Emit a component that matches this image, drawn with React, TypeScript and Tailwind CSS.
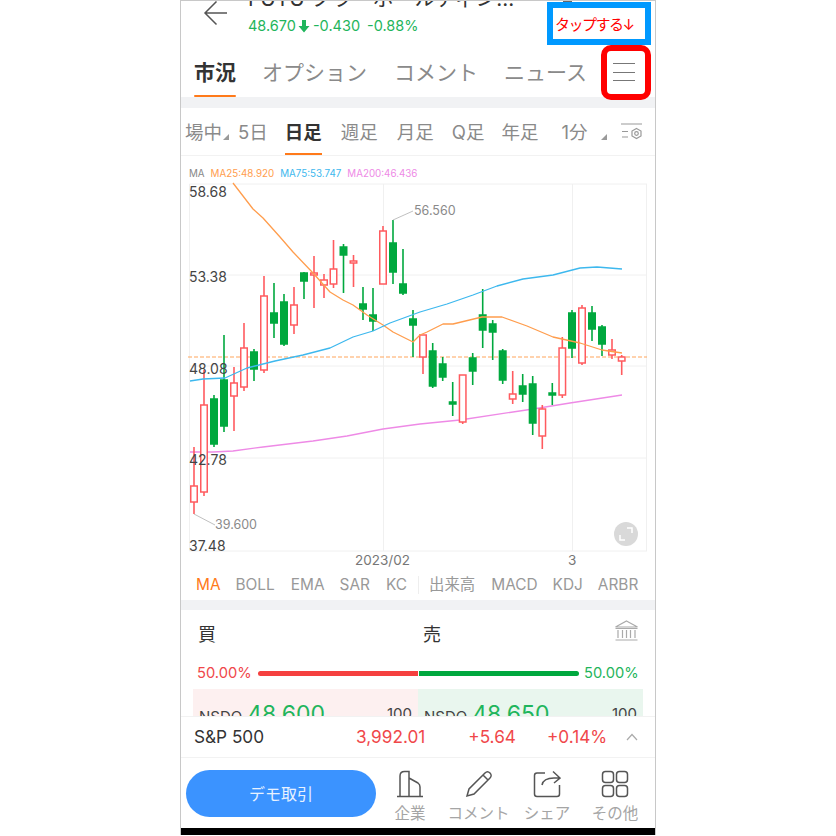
const sans = 'font-["Inter","Noto_Sans_CJK_JP",sans-serif]';

const RED = '#ff5b5f';
const GREEN = '#00a83e';

// x, wick top, body top, body bottom, wick bottom, up (hollow red) or down (solid green)
const candles: [number, number, number, number, number, boolean][] = [
    [194, 447, 486, 502, 514, true],
    [204, 370, 405, 492, 496, true],
    [214, 395, 399, 444, 447, false],
    [224, 335, 380, 426, 432, false],
    [234, 367, 383, 396, 431, true],
    [244, 323, 348, 387, 391, true],
    [254, 349, 352, 369, 381, false],
    [264, 276, 296, 370, 373, true],
    [274, 283, 313, 323, 338, false],
    [284, 294, 302, 344, 346, false],
    [294, 287, 305, 325, 334, true],
    [304, 272, 273, 281, 299, false],
    [314, 256, 273, 275, 308, true],
    [324, 274, 280, 285, 298, true],
    [333.5, 240, 269, 284, 288, true],
    [343.5, 244, 247, 255, 293, false],
    [353.5, 255, 261, 263, 287, true],
    [363, 287, 304, 309, 320, false],
    [373, 288, 315, 321, 331, false],
    [383, 226, 231, 284, 284, true],
    [393, 220, 243, 272, 284, false],
    [403, 249, 284, 293, 295, false],
    [413, 310, 319, 325, 357, false],
    [423, 335, 335, 357, 374, true],
    [432.7, 343, 351, 386, 388, false],
    [442.7, 357, 364, 377, 381, false],
    [452.7, 382, 402, 404, 416, false],
    [462.7, 375, 375, 422, 424, true],
    [472.7, 353, 358, 371, 385, false],
    [482.7, 289, 315, 330, 348, false],
    [492.7, 320, 324, 332, 360, false],
    [502.7, 349, 351, 380, 384, false],
    [512.7, 371, 394, 399, 404, true],
    [522.7, 374, 386, 394, 402, false],
    [532.7, 376, 384, 423, 435, false],
    [542.3, 405, 409, 436, 449, true],
    [552.3, 383, 393, 395, 405, false],
    [562.3, 337, 348, 395, 398, true],
    [572, 310, 313, 348, 358, false],
    [582, 305, 308, 363, 365, true],
    [592, 306, 313, 329, 341, false],
    [602, 325, 327, 344, 356, false],
    [612, 339, 350, 355, 359, true],
    [621.7, 355, 357, 361, 375, true],
];

const ma25 =
    '233,183 243,196 253,209 263,218 280,237 293,252 313,273 330,292 343,300 353,305 367,315 383,325 393,332 413,342 420,335 427,332 443,324 453,324 482,317 502,317 527,326 553,337 580,343 602,350 622,353';
const ma75 =
    '190,381 203,379 225,378 236,373 247,368 275,361 303,355 330,348 353,337 373,331 390,323 420,312 447,304 473,295 497,286 523,279 553,275 580,268 597,267 622,269';
const ma200 =
    '190,452 213,452 233,451 263,447 313,441 347,436 383,429 420,424 460,420 533,409 570,403 622,395';

function Chart() {
    return (
        <svg viewBox="181 156 474 419" className="block h-[419px] w-[474px]">
            <g stroke="#f0f0f0" strokeWidth="1" fill="none">
                <path d="M189.5 184H647M189.5 275H647M189.5 366H647M189.5 458H647M189.5 551H647" />
                <path d="M189.5 184V551M383.5 184V551M572.5 184V551M646.5 184V551" />
            </g>
            <line x1="188" y1="357" x2="647" y2="357" stroke="#ffa65c" strokeWidth="1.2" strokeDasharray="4 2" />
            <polyline points={ma200} fill="none" stroke="#ee8ae6" strokeWidth="1.3" strokeLinejoin="round" />
            {candles.map(([x, wt, bt, bb, wb, up]) => {
                const c = up ? RED : GREEN;
                return (
                    <g key={x}>
                        <line x1={x} y1={wt} x2={x} y2={wb} stroke={c} strokeWidth="1.6" />
                        <rect
                            x={x - 3.25}
                            y={bt}
                            width="6.5"
                            height={bb - bt}
                            fill={up ? '#fff' : c}
                            stroke={c}
                            strokeWidth="1.5"
                        />
                    </g>
                );
            })}
            <polyline points={ma25} fill="none" stroke="#ff9d4d" strokeWidth="1.3" strokeLinejoin="round" />
            <polyline points={ma75} fill="none" stroke="#3db8ee" strokeWidth="1.3" strokeLinejoin="round" />
            <polyline points="393,220 413,211" fill="none" stroke="#b0b0b0" strokeWidth="0.8" />
            <polyline points="194,514 215,525" fill="none" stroke="#b0b0b0" strokeWidth="0.8" />
            <g fontFamily="Inter, sans-serif" fontSize="12.500" fill="#8a8a8a">
                <text x="414" y="215">56.560</text>
                <text x="215" y="529">39.600</text>
            </g>
            <g fontFamily="Inter, sans-serif" fontSize="14" fill="#444">
                <text x="189" y="197">58.68</text>
                <text x="189" y="282">53.38</text>
                <text x="189" y="374">48.08</text>
                <text x="189" y="465">42.78</text>
                <text x="189" y="551">37.48</text>
            </g>
            <g fontFamily="Inter, sans-serif" fontSize="13.5" fill="#777">
                <text x="355" y="565">2023/02</text>
                <text x="568" y="565">3</text>
            </g>
            <circle cx="626" cy="534" r="12" fill="#d9d9d9" />
            <path d="M620 535v5h5M632 533v-5h-5" fill="none" stroke="#fff" strokeWidth="1.5" />
        </svg>
    );
}

function Triangle() {
    return (
        <svg width="6" height="6" viewBox="0 0 6 6" className="shrink-0">
            <path d="M6 0V6H0Z" fill="#9a9a9a" />
        </svg>
    );
}

export default function App() {
    return (
        <div className={`h-[836px] w-[836px] overflow-hidden bg-white pl-[180px] ${sans}`}>
            <div className="relative flex h-[835px] w-[476px] flex-col overflow-hidden border-x border-t border-[#c8c8c8] bg-white">
                {/* header, title is cut off by the top of the shot */}
                <div className="flex h-[46px] shrink-0 pl-[22px]">
                    <svg width="24" height="26" viewBox="0 0 24 26" className="shrink-0">
                        <path d="M24 12H2M13.5 0.5L2 12L13.5 23.5" fill="none" stroke="#555" strokeWidth="1.5" />
                    </svg>
                    <div className="ml-[21px] flex flex-col">
                        <div className="-mt-[14px] h-[24px] whitespace-nowrap text-[20.8px] leading-[24px] text-[#333]">
                            FUTU ブラ・ボールディン...
                        </div>
                        <div className="mt-[5px] flex items-center whitespace-nowrap text-[14.5px] leading-[20px] text-[#1fb55c]">
                            <span>48.670</span>
                            <svg width="12" height="13" viewBox="0 0 12 13" className="ml-[2px]">
                                <path d="M4 0H8V6H11.5L6 12.5L0.5 6H4Z" fill="#1fb55c" />
                            </svg>
                            <span className="ml-[3px]">-0.430</span>
                            <span className="ml-[7px]">-0.88%</span>
                        </div>
                    </div>
                </div>

                {/* tabs */}
                <div className="flex h-[50px] shrink-0 items-start pl-[13px] text-[21px] leading-[52px] text-[#8a8a8a]">
                    <div className="flex h-[50px] flex-col">
                        <span className="h-[48px] font-bold text-[#333]">市況</span>
                        <span className="h-[2px] rounded-full bg-[#ff7a1a]" />
                    </div>
                    <span className="ml-[26px]">オプション</span>
                    <span className="ml-[27px]">コメント</span>
                    <span className="ml-[26px]">ニュース</span>
                    <div className="ml-[26px] mt-[16px] flex w-[22px] flex-col gap-[7.5px]">
                        <span className="h-px bg-[#777]" />
                        <span className="h-px bg-[#777]" />
                        <span className="h-px bg-[#777]" />
                    </div>
                </div>
                <div className="h-[11px] shrink-0 bg-[#f1f2f4]" />

                {/* period row */}
                <div className="flex h-[48px] shrink-0 items-start border-b border-[#f2f2f2] pl-[4px] text-[18.5px] leading-[48px] text-[#8a8a8a]">
                    <span>場中</span>
                    <span className="ml-px mt-[26px]">
                        <Triangle />
                    </span>
                    <span className="ml-[9px]">5日</span>
                    <div className="ml-[17px] flex h-[48px] flex-col">
                        <span className="h-[45px] font-bold text-[#333]">日足</span>
                        <span className="h-[2px] bg-[#ff7a1a]" />
                    </div>
                    <span className="ml-[19px]">週足</span>
                    <span className="ml-[19px]">月足</span>
                    <span className="ml-[18px]">Q足</span>
                    <span className="ml-[17px]">年足</span>
                    <span className="ml-[23px]">1分</span>
                    <span className="ml-[13px] mt-[26px]">
                        <Triangle />
                    </span>
                    <svg width="23" height="21" viewBox="0 0 23 21" fill="none" stroke="#999" strokeWidth="1.2" className="ml-[14px] mt-[15px]">
                        <path d="M0 1H21M1 8.5H7M1 14H7" />
                        <path d="M15.5 5.5L20 8V13L15.5 15.5L11 13V8Z" />
                        <circle cx="15.5" cy="10.5" r="1.8" />
                    </svg>
                </div>

                {/* chart */}
                <div className="relative h-[419px] shrink-0">
                    <Chart />
                    <div className="absolute left-[8px] top-[11px] flex gap-[6px] whitespace-nowrap text-[9.8px] leading-[14px]">
                        <span className="text-[#888]">MA</span>
                        <span className="text-[#ff9d4d]">MA25:48.920</span>
                        <span className="text-[#3db8ee]">MA75:53.747</span>
                        <span className="text-[#ee8ae6]">MA200:46.436</span>
                    </div>
                </div>

                {/* indicators */}
                <div className="-mt-[4px] mb-[2px] flex h-[27px] shrink-0 items-center pl-[15px] text-[15.4px] leading-[20px] text-[#999]">
                    <span className="text-[#ff7a1a]">MA</span>
                    <span className="ml-[15px]">BOLL</span>
                    <span className="ml-[16px]">EMA</span>
                    <span className="ml-[15px]">SAR</span>
                    <span className="ml-[16px]">KC</span>
                    <span className="ml-[11px] h-[18px] w-px bg-[#eee]" />
                    <span className="ml-[10px]">出来高</span>
                    <span className="ml-[16px]">MACD</span>
                    <span className="ml-[15px]">KDJ</span>
                    <span className="ml-[15px]">ARBR</span>
                </div>
                <div className="h-[10px] shrink-0 bg-[#f1f2f4]" />

                {/* order book, cut off by the ticker bar */}
                <div className="flex h-[47px] shrink-0 items-center pl-[17px] pr-[17px] text-[18px] text-[#333]">
                    <span className="mt-[1px]">買</span>
                    <span className="ml-[207px] mt-[1px]">売</span>
                    <svg width="25" height="22" viewBox="0 0 25 22" fill="none" stroke="#aaa" strokeWidth="1.2" className="ml-auto -mt-[6px] -mr-[1px]">
                        <path d="M12.5 1L23.5 7H1.5ZM1.5 8.5H23.5M4 10V18M8.5 10V18M12.5 10V18M16.5 10V18M21 10V18M1.5 20H23.5" />
                    </svg>
                </div>
                <div className="flex h-[32px] shrink-0 items-center pl-[16px] text-[14.7px] leading-[20px]">
                    <span className="w-[60px] text-[#f0474a]">50.00%</span>
                    <span className="ml-px h-[5px] w-[160px] rounded-l-full bg-[#f5403f]" />
                    <span className="ml-px h-[5px] w-[160px] rounded-r-full bg-[#00a83e]" />
                    <span className="ml-[5px] text-[#1fb55c]">50.00%</span>
                </div>
                <div className="mx-[12px] flex h-[27px] shrink-0 overflow-hidden">
                    <div className="flex flex-1 items-start justify-between bg-[#fdf0f0] pl-[6px] pr-[6px] pt-[15px] text-[15px] leading-[20px] text-[#444]">
                        <span className="flex items-baseline gap-[5px]">
                            NSDQ <span className="text-[23px] leading-[20px] text-[#1fb55c]">48.600</span>
                        </span>
                        <span>100</span>
                    </div>
                    <div className="flex flex-1 items-start justify-between bg-[#e9f6ee] pl-[6px] pr-[6px] pt-[15px] text-[15px] leading-[20px] text-[#444]">
                        <span className="flex items-baseline gap-[5px]">
                            NSDQ <span className="text-[23px] leading-[20px] text-[#1fb55c]">48.650</span>
                        </span>
                        <span>100</span>
                    </div>
                </div>

                {/* ticker */}
                <div className="relative flex h-[42px] shrink-0 items-center border-y border-[#f2f2f2] bg-white pl-[13px] text-[17.2px] text-[#f0474a]">
                    <span className="text-[#333]">S&amp;P 500</span>
                    <span className="ml-[92px]">3,992.01</span>
                    <span className="ml-[43px]">+5.64</span>
                    <span className="ml-[31px]">+0.14%</span>
                    <svg width="12" height="8" viewBox="0 0 12 8" className="ml-[19px]">
                        <path d="M1 7L6 1.5L11 7" fill="none" stroke="#aaa" strokeWidth="1.2" />
                    </svg>
                </div>

                {/* bottom bar */}
                <div className="flex h-[70px] shrink-0 items-start pl-[5px]">
                    <button className="mt-[12px] h-[47px] w-[190px] rounded-full bg-[#3b93ff] text-[16px] text-[#e8f2ff]">
                        デモ取引
                    </button>
                    <div className="flex flex-1 text-[15.5px] leading-[20px] text-[#a5a5a5]">
                        <div className="flex w-[68px] flex-col items-center pt-[12px]">
                            <svg width="28" height="28" viewBox="0 0 28 28" fill="none" stroke="#555" strokeWidth="1.5">
                                <path d="M1 26.5H27M4 26V6C4 3 6 1.5 8.5 1.5H13V26M13 8L22 13C23.5 14 24 15 24 17V26" />
                            </svg>
                            <span className="mt-[6px] whitespace-nowrap">企業</span>
                        </div>
                        <div className="flex w-[69px] flex-col items-center pt-[12px]">
                            <svg width="28" height="28" viewBox="0 0 28 28" fill="none" stroke="#555" strokeWidth="1.5">
                                <path d="M2 26L4 19L20 3C21.5 1.5 23.5 1.5 25 3C26.5 4.5 26.5 6.5 25 8L9 24ZM18 5L23 10" />
                            </svg>
                            <span className="mt-[6px] whitespace-nowrap">コメント</span>
                        </div>
                        <div className="flex w-[68px] flex-col items-center pt-[12px]">
                            <svg width="28" height="28" viewBox="0 0 28 28" fill="none" stroke="#555" strokeWidth="1.5">
                                <path d="M12 3H4C2.500 3 1.500 4 1.500 5.500V24C1.500 25.500 2.500 26.500 4 26.500H24C25.500 26.500 26.500 25.500 26.500 24V15" />
                                <path d="M9 15C10 10 14 8 21 8H27M20 1.500L27 8L21 13" />
                            </svg>
                            <span className="mt-[6px] whitespace-nowrap">シェア</span>
                        </div>
                        <div className="flex w-[68px] flex-col items-center pt-[12px]">
                            <svg width="28" height="28" viewBox="0 0 28 28" fill="none" stroke="#555" strokeWidth="1.5">
                                <rect x="1.500" y="1.500" width="11" height="11" rx="3" />
                                <rect x="15.500" y="1.500" width="11" height="11" rx="3" />
                                <rect x="1.500" y="15.500" width="11" height="11" rx="3" />
                                <rect x="15.500" y="15.500" width="11" height="11" rx="3" />
                            </svg>
                            <span className="mt-[6px] whitespace-nowrap">その他</span>
                        </div>
                    </div>
                </div>
                <div className="h-[7px] shrink-0 bg-black" />

                {/* annotations placed over the shot */}
                <span className="absolute left-[382px] top-0 h-px w-[9px] bg-[#666]" />
                <div className="absolute left-[366px] top-[1px] flex h-[43px] w-[104px] items-center border-[6px] border-[#0099ff] bg-white pl-[2px] pt-[3px] text-[15px] font-normal text-[#ff0000]">
                    <span className="whitespace-nowrap tracking-[-1.5px]">タップする↓</span>
                </div>
                <div className="absolute left-[420px] top-[44px] h-[55px] w-[50px] rounded-[10px] border-[6px] border-[#ff0000]" />
            </div>
        </div>
    );
}
